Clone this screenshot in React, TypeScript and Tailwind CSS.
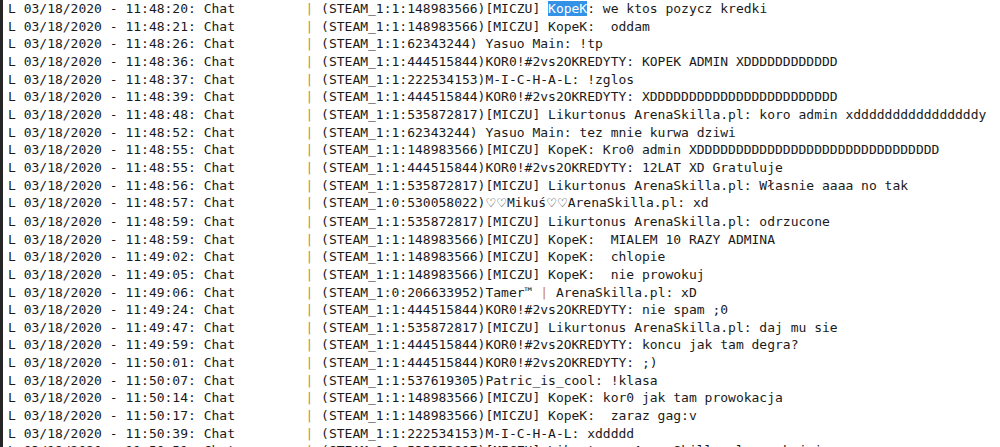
const rows: [string, string][] = [
  ['11:48:20', '(STEAM_1:1:148983566)[MICZU] KopeK: we ktos pozycz kredki'],
  ['11:48:21', '(STEAM_1:1:148983566)[MICZU] KopeK:  oddam'],
  ['11:48:26', '(STEAM_1:1:62343244) Yasuo Main: !tp'],
  ['11:48:36', '(STEAM_1:1:444515844)KOR0!#2vs2OKREDYTY: KOPEK ADMIN XDDDDDDDDDDDD'],
  ['11:48:37', '(STEAM_1:1:222534153)M-I-C-H-A-L: !zglos'],
  ['11:48:39', '(STEAM_1:1:444515844)KOR0!#2vs2OKREDYTY: XDDDDDDDDDDDDDDDDDDDDDDDD'],
  ['11:48:48', '(STEAM_1:1:535872817)[MICZU] Likurtonus ArenaSkilla.pl: koro admin xddddddddddddddddy'],
  ['11:48:52', '(STEAM_1:1:62343244) Yasuo Main: tez mnie kurwa dziwi'],
  ['11:48:55', '(STEAM_1:1:148983566)[MICZU] KopeK: Kro0 admin XDDDDDDDDDDDDDDDDDDDDDDDDDDDDDDD'],
  ['11:48:55', '(STEAM_1:1:444515844)KOR0!#2vs2OKREDYTY: 12LAT XD Gratuluje'],
  ['11:48:56', '(STEAM_1:1:535872817)[MICZU] Likurtonus ArenaSkilla.pl: Własnie aaaa no tak'],
  ['11:48:57', '(STEAM_1:0:530058022)♡♡Mikuś♡♡ArenaSkilla.pl: xd'],
  ['11:48:59', '(STEAM_1:1:535872817)[MICZU] Likurtonus ArenaSkilla.pl: odrzucone'],
  ['11:48:59', '(STEAM_1:1:148983566)[MICZU] KopeK:  MIALEM 10 RAZY ADMINA'],
  ['11:49:02', '(STEAM_1:1:148983566)[MICZU] KopeK:  chlopie'],
  ['11:49:05', '(STEAM_1:1:148983566)[MICZU] KopeK:  nie prowokuj'],
  ['11:49:06', '(STEAM_1:0:206633952)Tamer™ | ArenaSkilla.pl: xD'],
  ['11:49:24', '(STEAM_1:1:444515844)KOR0!#2vs2OKREDYTY: nie spam ;0'],
  ['11:49:47', '(STEAM_1:1:535872817)[MICZU] Likurtonus ArenaSkilla.pl: daj mu sie'],
  ['11:49:59', '(STEAM_1:1:444515844)KOR0!#2vs2OKREDYTY: koncu jak tam degra?'],
  ['11:50:01', '(STEAM_1:1:444515844)KOR0!#2vs2OKREDYTY: ;)'],
  ['11:50:07', '(STEAM_1:1:537619305)Patric_is_cool: !klasa'],
  ['11:50:14', '(STEAM_1:1:148983566)[MICZU] KopeK: kor0 jak tam prowokacja'],
  ['11:50:17', '(STEAM_1:1:148983566)[MICZU] KopeK:  zaraz gag:v'],
  ['11:50:39', '(STEAM_1:1:222534153)M-I-C-H-A-L: xddddd'],
  ['11:50:51', '(STEAM_1:1:535872817)[MICZU] Likurtonus ArenaSkilla.pl: spokojnie'],
];

// hearts fall outside the mono font, give them a sans one so they read
function Plain({ text }: { text: string }) {
  return (
    <>
      {text.split('♡').map((p, i) => (
        <span key={i}>
          {i > 0 && (
            <span className="text-[12px]" style={{ fontFamily: '"DejaVu Sans", sans-serif' }}>
              ♡
            </span>
          )}
          {p}
        </span>
      ))}
    </>
  );
}

// pipes inside the message get the same orange as the column bar
function Message({ text, selected }: { text: string; selected?: boolean }) {
  if (selected) {
    const at = text.indexOf('KopeK');
    return (
      <>
        {text.slice(0, at)}
        <span className="bg-[#3391e6] text-white">KopeK</span>
        {text.slice(at + 5)}
      </>
    );
  }
  return (
    <>
      {text.split('|').map((p, i) => (
        <span key={i}>
          {i > 0 && <span className="text-[#c98a3b]">|</span>}
          <Plain text={p} />
        </span>
      ))}
    </>
  );
}

export default function App() {
  return (
    <div className="flex w-[1000px] h-[447px] overflow-hidden bg-white">
      <div className="w-[3px] shrink-0 bg-[#262626]" />
      <div
        className="flex-1 pl-[5px] text-[13px] leading-[17.65px] text-[#1a1a1a] whitespace-pre"
        style={{ fontFamily: '"DejaVu Sans Mono", "Liberation Mono", monospace' }}
      >
        {rows.map(([time, msg], i) => (
          <div key={i}>
            {`L 03/18/2020 - ${time}: Chat         `}
            <span className="text-[#c98a3b]">|</span>
            {' '}
            <Message text={msg} selected={i === 0} />
          </div>
        ))}
      </div>
    </div>
  );
}
